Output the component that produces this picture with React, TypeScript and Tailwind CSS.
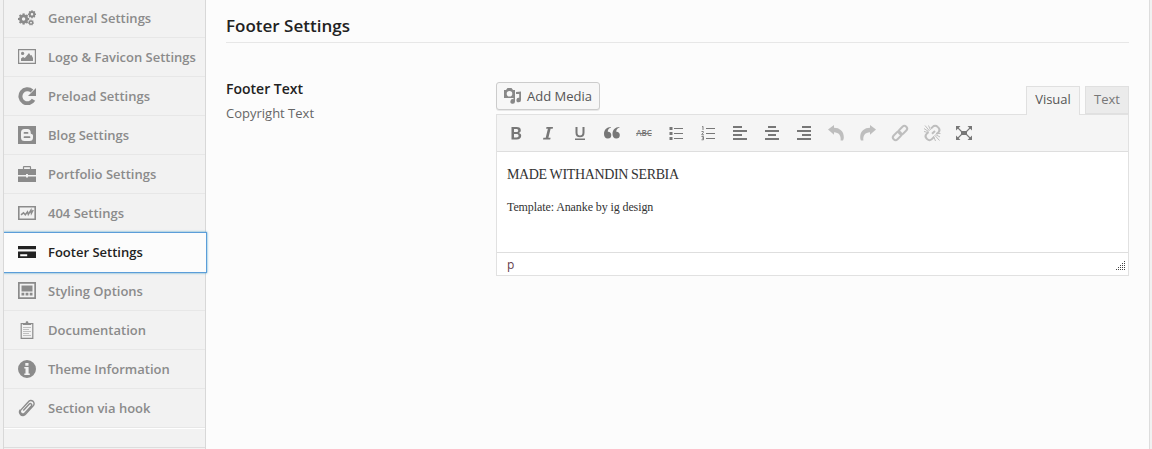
import type { ReactNode } from "react";

const Svg = ({ children, size = 18 }: { children: ReactNode; size?: 18 | 20 }) => (
  <svg width={size} height={size} viewBox={`0 0 ${size} ${size}`} fill="currentColor" className="shrink-0">
    {children}
  </svg>
);

function Gear({ x, y, r, teeth }: { x: number; y: number; r: number; teeth: number }) {
  return (
    <g transform={`translate(${x} ${y})`}>
      <circle r={r * 0.56} fill="none" stroke="currentColor" strokeWidth={r * 0.5} />
      {Array.from({ length: teeth }, (_, i) => (
        <rect key={i} x={-r * 0.19} y={-r} width={r * 0.38} height={r * 0.35} transform={`rotate(${(i * 360) / teeth})`} />
      ))}
    </g>
  );
}

const items: { label: string; icon: ReactNode; active?: boolean }[] = [
  {
    label: "General Settings",
    icon: (
      <>
        <Gear x={5.6} y={10} r={5.6} teeth={8} />
        <Gear x={14} y={5.3} r={4} teeth={8} />
        <Gear x={13} y={13.6} r={3} teeth={7} />
      </>
    ),
  },
  {
    label: "Logo & Favicon Settings",
    icon: (
      <>
        <path fillRule="evenodd" d="M0 1h18v15H0zM1.200 2.200v12.600h15.600V2.200z" />
        <circle cx="4.600" cy="5.400" r="1.600" />
        <path d="M3 13v-2.500l2-1.500 1.800 1L11 5l1.500 2.500 1-.6L15 10v3z" />
      </>
    ),
  },
  {
    label: "Preload Settings",
    icon: (
      <>
        <path d="M15.500 12.800A7 7 0 1 1 14 4" fill="none" stroke="currentColor" strokeWidth="4" />
        <path d="M18 1v8h-8z" />
      </>
    ),
  },
  {
    label: "Blog Settings",
    icon: (
      <path
        fillRule="evenodd"
        d="M0 0h18v18H0zM6.5 3A3.5 3.5 0 0 0 3 6.5v5A3.5 3.5 0 0 0 6.500 15h5a3.500 3.500 0 0 0 3.500-3.500V9.500Q15 8 13.500 8 12.700 8 12.700 7V6.500A3.500 3.500 0 0 0 9.500 3zM6.500 6h3a.9.9 0 0 1 0 1.800h-3a.9.9 0 0 1 0-1.800zM6.500 10.300h5a.9.9 0 0 1 0 1.800h-5a.9.9 0 0 1 0-1.800z"
      />
    ),
  },
  {
    label: "Portfolio Settings",
    icon: (
      <>
        <path d="M5.500 4V2Q5.500 1.600 6 1.600h6q.5 0 .5.400v2" fill="none" stroke="currentColor" strokeWidth="1.200" />
        <path d="M0 4h18v6h-8V9H8v1H0zM0 11.500h8v1h2v-1h8V17H0z" />
      </>
    ),
  },
  {
    label: "404 Settings",
    icon: (
      <>
        <path fillRule="evenodd" d="M0 2h18v14H0zM1.600 3.600v10.800h14.800V3.600z" />
        <path d="M3 10.800l2.500-2 1.800 2 2.200-3 .8 2.600 2.700-4.200.4 3.200L15.200 6" fill="none" stroke="currentColor" strokeWidth="1.500" />
      </>
    ),
  },
  {
    label: "Footer Settings",
    active: true,
    icon: <path fillRule="evenodd" d="M0 3h18v3.300H0zM0 8.500h18V15H0zM2.200 11.200v2h7v-2z" />,
  },
  {
    label: "Styling Options",
    icon: (
      <>
        <path fillRule="evenodd" d="M0 0h18v17H0zM1.700 1.700v13.600h14.600V1.700z" />
        <path d="M3.500 3.500h11v6h-11zM3.500 10.700h2.800v2.800H3.500zM7.600 10.700h2.800v2.800H7.600zM11.700 10.700h2.800v2.800h-2.800z" />
      </>
    ),
  },
  {
    label: "Documentation",
    icon: (
      <>
        <path fillRule="evenodd" d="M2.600 2h12.800v16H2.600zM3.800 3.200v13.600h10.400V3.200z" />
        <path d="M5 4V2.500h2.500Q7.500 0 9 0t1.500 2.500H13V4z" />
        <path d="M5 6.500h8M5 8.500h6M5 10.500h8M5 12.500h6M5 14.500h8" stroke="currentColor" strokeWidth=".7" opacity=".7" />
      </>
    ),
  },
  {
    label: "Theme Information",
    icon: <path fillRule="evenodd" d="M9 0a9 9 0 1 1 0 18A9 9 0 0 1 9 0zM7.300 3v2.800h3.200V3zM6.300 7v1.600h1.200v4.800H6.300V15h5.500v-1.600h-1.200V7z" />,
  },
  {
    label: "Section via hook",
    icon: (
      <path
        d="M5.300 11.500l6-6.500a1.300 1.300 0 0 1 2 1.900l-6.600 7.200a2.400 2.400 0 0 1-3.700-3.200l7.400-8.200a3.100 3.100 0 0 1 5 3.900l-7.500 8.300a3.600 3.600 0 0 1-5.500.5 3.600 3.600 0 0 1 0-4.600"
        fill="none"
        stroke="currentColor"
        strokeWidth="1.400"
      />
    ),
  },
];

const chain = (
  <g fill="none" stroke="currentColor" strokeWidth="2">
    <rect x="-4.800" y="-2.700" width="9.600" height="5.400" rx="2.700" transform="translate(12.900 7.100) rotate(-45)" />
    <rect x="-4.800" y="-2.700" width="9.600" height="5.400" rx="2.700" transform="translate(7.100 12.900) rotate(-45)" />
  </g>
);

const undo = <path d="M2 6.500L8 2v2.800c5.500 0 9.800 3.400 9.800 9.200 0 1.700-.3 2.700-.8 3.500h-2.400c.6-5.300-1.800-8-6.600-8.300v2.500z" />;

const tools: { name: string; dim?: boolean; icon: ReactNode }[] = [
  { name: "Bold", icon: <path fillRule="evenodd" d="M5.500 4h5c3 0 4.300 1.100 4.300 3.200 0 1.500-.7 2.400-2 2.700 1.600.4 2.400 1.400 2.400 2.900 0 2.400-1.700 3.700-4.600 3.700H5.500zM8 6v3h2.200c1.400 0 2-.5 2-1.500S11.500 6 10.200 6zM8 11v3.400h2.500c1.400 0 2.100-.6 2.100-1.700S11.800 11 10.300 11z" /> },
  { name: "Italic", icon: <path d="M8.500 4H15l-.3 1.700h-2.100l-2.200 9.100h2.200l-.4 1.700H5l.4-1.700h2.300l2.200-9.100H8.100z" /> },
  { name: "Underline", icon: <path d="M5.500 4h2v5.500c0 2 .7 3 2.500 3s2.500-1 2.500-3V4h2v5.700c0 3-1.600 4.500-4.500 4.500s-4.500-1.500-4.500-4.500zM5 15.500h10V17H5z" /> },
  {
    name: "Blockquote",
    icon: (
      <>
        <path d="M9 4.500C6.500 5 5.700 7 5.800 8.800c2-.2 3.500 1.100 3.500 3.200A3.500 3.500 0 0 1 5.700 15.500C3.300 15.500 2 13.600 2 11c0-4 2.500-7 7-7z" />
        <path d="M17.500 4.500c-2.500.5-3.300 2.500-3.200 4.300 2-.2 3.500 1.100 3.500 3.200a3.500 3.500 0 0 1-3.600 3.500c-2.400 0-3.700-1.900-3.700-4.500 0-4 2.500-7 7-7z" />
      </>
    ),
  },
  { name: "Strikethrough", icon: null },
  { name: "Bulleted list", icon: <path d="M3.500 4h3v3h-3zM3.500 9h3v3h-3zM3.500 14h3v3h-3zM8 5h9v1H8zM8 10h9v1H8zM8 15h9v1H8z" /> },
  {
    name: "Numbered list",
    icon: (
      <>
        <path d="M8 5h9v1H8zM8 10h9v1H8zM8 15h9v1H8z" />
        <path d="M4 4l1-.7V7M3.500 8.500h1.800v1.200l-1.500 1.500v.6H6M3.500 13.500h2v3.300h-2M4 15.100h1.500" fill="none" stroke="currentColor" strokeWidth=".9" />
      </>
    ),
  },
  { name: "Align left", icon: <path d="M3 3h9v2H3zM3 7h14v2H3zM3 11h9v2H3zM3 15h14v2H3z" /> },
  { name: "Align center", icon: <path d="M6 3h8v2H6zM3 7h14v2H3zM6 11h8v2H6zM3 15h14v2H3z" /> },
  { name: "Align right", icon: <path d="M8 3h9v2H8zM3 7h14v2H3zM8 11h9v2H8zM3 15h14v2H3z" /> },
  { name: "Undo", dim: true, icon: undo },
  { name: "Redo", dim: true, icon: <g transform="translate(20 0) scale(-1 1)">{undo}</g> },
  { name: "Insert link", dim: true, icon: chain },
  {
    name: "Remove link",
    dim: true,
    icon: (
      <>
        <path d="M8.500 5.500l1.700-1.600a3.300 3.300 0 0 1 4.900 0l1 1a3.300 3.300 0 0 1-.3 4.500L14 11M6 9l-1.900 1.900a3.300 3.300 0 0 0 0 4.600l.6.6a3.300 3.300 0 0 0 4.600 0L11.500 14M9.500 10.800L12.500 8" fill="none" stroke="currentColor" strokeWidth="2" transform="translate(.5 0)" />
        <path d="M7.500 8L3 2.500M6.500 8.500L2 5.500M6 9.500L2 8.500M8.500 7L6.500 2.500M12.500 12l5 5.500M13.500 11.500L18 14M14 10.500h4.500M11.500 13l2 5" stroke="currentColor" strokeWidth="1" />
      </>
    ),
  },
  {
    name: "Fullscreen",
    icon: (
      <>
        <path d="M7 8h6v4H7zM2 3h4.500L2 7.500zM18 3h-4.500L18 7.500zM2 17h4.500L2 12.500zM18 17h-4.500l4.500-4.500z" />
        <path d="M3 4l5 5M17 4l-5 5M3 16l5-5M17 16l-5-5" stroke="currentColor" strokeWidth="1.100" />
      </>
    ),
  },
];

function Sidebar() {
  return (
    <nav className="-mt-px h-[450px] w-[203px] shrink-0 border-x border-[#d8d8d8] bg-[#f2f2f2] text-[13px] font-semibold text-[#8b8b8b]">
      {items.map(({ label, icon, active }) => (
        <a
          key={label}
          className={
            active
              ? "relative flex h-[39px] w-[202px] items-center border-b border-[#fcfcfc] bg-[#fcfcfc] pl-3.5 text-[#222] shadow-[0_0_0_1px_#5b9dd9,0_0_2px_1px_#1e8cbecc] [clip-path:inset(-4px_-4px_-4px_0)]"
              : "flex h-[39px] items-center border-b border-[#e7e7e7] pl-3.5"
          }
        >
          <Svg>{icon}</Svg>
          <span className="ml-3 pt-[2px] whitespace-nowrap">{label}</span>
        </a>
      ))}
      <div className="h-5 border-t border-b border-t-white border-b-[#dddddd]" />
    </nav>
  );
}

function Editor() {
  return (
    <div className="w-[633px] pt-[39px]">
      <div className="flex h-8 items-start justify-between">
        <button className="flex h-7 w-[104px] items-center rounded-[3px] border border-[#ccc] bg-[#f7f7f7] pl-1.5 text-[13px] text-[#555] shadow-[0_1px_0_rgba(0,0,0,0.08)]">
          <span className="text-[#888]">
            <Svg size={20}>
              <path fillRule="evenodd" d="M1 4h2l1.500-2h4L10 4h2v8H1zM6.500 5a2.800 2.800 0 1 0 0 5.600 2.800 2.800 0 0 0 0-5.600z" />
              <path d="M13 6l5-.5V14a2.300 2.300 0 1 1-1.800-2.200V8H13zM10.500 11H12v4.500a2.300 2.300 0 1 1-1.500-2.200z" />
            </Svg>
          </span>
          <span className="ml-1 pt-[2px] whitespace-nowrap">Add Media</span>
        </button>
        <div className="relative z-10 mt-1 flex gap-[5px] text-[13px]">
          <div className="h-[29px] w-[54px] border border-b-0 border-[#e0e0e0] bg-[#f5f5f5] pt-[3px] text-center text-[#555]">Visual</div>
          <div className="h-7 w-11 border border-[#e0e0e0] bg-[#ebebeb] pt-[3px] text-center text-[#777]">Text</div>
        </div>
      </div>
      <div className="h-[162px] border border-[#e1e1e1] bg-white">
        <div className="flex h-[37px] items-center border-b border-[#dedede] bg-[#f5f5f5] pl-[3px] text-[#777]">
          {tools.map(({ name, dim, icon }) => (
            <button key={name} aria-label={name} className={dim ? "flex w-8 justify-center text-[#bebebe]" : "flex w-8 justify-center"}>
              {icon ? <Svg size={20}>{icon}</Svg> : <span className="text-[8px] leading-5 font-semibold line-through">ABC</span>}
            </button>
          ))}
        </div>
        <div className="h-[100px] px-2.5 pt-[13px] font-['Liberation_Serif',serif] text-[#333]">
          <p className="text-[14px] leading-[19px] tracking-[-0.37px]">MADE WITHANDIN SERBIA</p>
          <p className="mt-3.5 text-[12px] leading-[19px] tracking-[-0.1px]">Template: Ananke by ig design</p>
        </div>
        <div className="flex h-[23px] items-center justify-between border-t border-[#dedede] pr-0.5 pl-2.5 text-[13px] text-[#643c4b]">
          <span className="pt-[2px] text-[12px]">p</span>
          <svg width="11" height="11" viewBox="0 0 11 11" stroke="#444" strokeWidth="1" className="mt-1">
            <path d="M9 .5h2M7 2.500h4M5 4.500h6M3 6.500h8M1 8.500h10" strokeDasharray="1 1" />
          </svg>
        </div>
      </div>
    </div>
  );
}

export default function App() {
  return (
    <div className="flex h-[449px] w-[1152px] overflow-hidden bg-[#f1f1f1] pl-[3px] font-['Open_Sans',sans-serif]">
      <Sidebar />
      <main className="w-[944px] border-r border-[#ddd] bg-[#fcfcfc] pr-5 pl-5">
        <h1 className="h-[43px] border-b border-[#e7e7e7] pt-[13px] text-[17px] leading-[26px] font-semibold text-[#222]">Footer Settings</h1>
        <div className="flex">
          <div className="w-[270px] shrink-0 pt-9 text-[13px]">
            <h2 className="text-[14px] leading-5 font-semibold text-[#222]">Footer Text</h2>
            <p className="mt-1 leading-5 text-[#666]">Copyright Text</p>
          </div>
          <Editor />
        </div>
      </main>
    </div>
  );
}
